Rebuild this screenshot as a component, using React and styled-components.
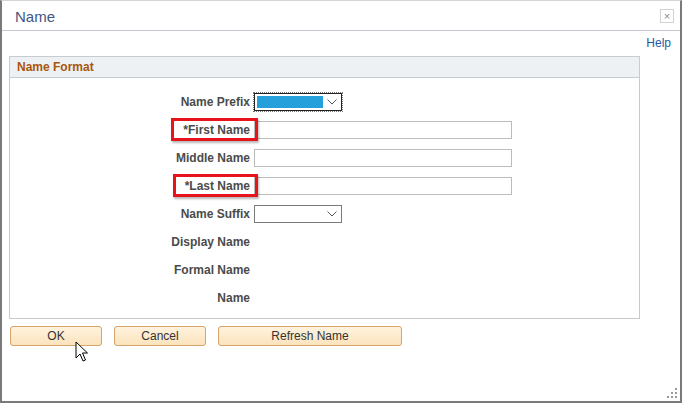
import { Fragment } from "react";
import styled, { createGlobalStyle } from "styled-components";

const Global = createGlobalStyle`
  html, body {
    margin: 0;
    padding: 0;
    background: #ffffff;
  }
  body {
    font-family: "Liberation Sans", Arial, sans-serif;
  }
`;

const Window = styled.div`
  position: relative;
  box-sizing: border-box;
  width: 682px;
  height: 403px;
  background: #fff;
  border: 2px solid #7a7a7a;
  border-top: 1px solid #d4d4d4;
  display: flex;
  flex-direction: column;
`;

const TitleBar = styled.div`
  height: 29px;
  flex-shrink: 0;
  display: flex;
  align-items: center;
  justify-content: space-between;
  padding: 0 6px 0 13px;
  border-bottom: 1px solid #c4cacf;
`;

const Title = styled.div`
  font-size: 15px;
  color: #3e5783;
  padding-top: 2px;
`;

const CloseBtn = styled.div`
  box-sizing: border-box;
  width: 14px;
  height: 14px;
  border: 1px solid #d2d2d2;
  display: flex;
  align-items: center;
  justify-content: center;
  color: #8a8a8a;
  font-size: 11px;
  line-height: 1;
  margin-top: 1px;
`;

const HelpRow = styled.div`
  display: flex;
  justify-content: flex-end;
  padding: 5px 9px 0 0;
  height: 20px;
`;

const HelpLink = styled.a`
  font-size: 12px;
  color: #1e5aa8;
  text-decoration: none;
`;

const Section = styled.div`
  box-sizing: border-box;
  margin-left: 7px;
  width: 631px;
  height: 263px;
  border: 1px solid #c9c9c9;
  border-top: none;
`;

const SectionHeader = styled.div`
  box-sizing: border-box;
  height: 22px;
  margin: 0 -1px;
  background: #eef1f3;
  border: 1px solid #c5ccd2;
  padding-left: 7px;
  display: flex;
  align-items: center;
  font-size: 12px;
  font-weight: bold;
  color: #a9560d;
`;

const Form = styled.div`
  display: grid;
  grid-template-columns: 240px 1fr;
  column-gap: 4px;
  grid-auto-rows: 28px;
  padding-top: 10px;
`;

const Label = styled.div`
  position: relative;
  display: flex;
  align-items: center;
  justify-content: flex-end;
  font-size: 12px;
  font-weight: bold;
  color: #4b4b4b;
`;

const Highlight = styled.span`
  position: absolute;
  top: 2px;
  right: -8px;
  width: ${(p) => p.$w}px;
  height: 23px;
  box-sizing: border-box;
  border: 3px solid #e8141b;
  box-shadow: 1px 2px 2px rgba(0, 0, 0, 0.28);
  z-index: 2;
  pointer-events: none;
`;

const Field = styled.div`
  display: flex;
  align-items: center;
`;

const TextInput = styled.div`
  box-sizing: border-box;
  width: 258px;
  height: 18px;
  border: 1px solid #bcbcbc;
  background: #fff;
`;

const Select = styled.div`
  box-sizing: border-box;
  width: 88px;
  height: 18px;
  display: flex;
  align-items: center;
  justify-content: space-between;
  padding: 0 4px 0 2px;
  background: #fff;
  border: 1px solid ${(p) => (p.$focus ? "#222" : "#7a7a7a")};
  outline: ${(p) => (p.$focus ? "1px dotted #777" : "none")};
  outline-offset: 0;
`;

const SelectValue = styled.div`
  width: 66px;
  height: 12px;
  background: ${(p) => (p.$selected ? "#26a0da" : "transparent")};
`;

const ButtonRow = styled.div`
  display: flex;
  gap: 12px;
  margin: 7px 0 0 8px;
`;

const Button = styled.button`
  box-sizing: border-box;
  width: ${(p) => p.$w}px;
  height: 20px;
  padding: 0;
  font-family: "Liberation Sans", Arial, sans-serif;
  font-size: 12px;
  color: #333;
  background: linear-gradient(#fff3de, #fbe3bc);
  border: 1px solid #d5a56c;
  border-radius: 3px;
`;

const Pointer = styled.svg`
  position: absolute;
  left: 73px;
  top: 340px;
  z-index: 3;
`;

const Grip = styled.svg`
  position: absolute;
  right: 2px;
  bottom: 2px;
`;

const Chevron = () => (
  <svg width="10" height="6" viewBox="0 0 10 6">
    <path d="M0.5 0.5 L5 5 L9.5 0.5" fill="none" stroke="#555" strokeWidth="1" />
  </svg>
);

const rows = [
  { label: "Name Prefix", kind: "select", focus: true },
  { label: "*First Name", kind: "input", mark: 87 },
  { label: "Middle Name", kind: "input" },
  { label: "*Last Name", kind: "input", mark: 85 },
  { label: "Name Suffix", kind: "select" },
  { label: "Display Name" },
  { label: "Formal Name" },
  { label: "Name" },
];

export default function App() {
  return (
    <>
      <Global />
      <Window>
        <TitleBar>
          <Title>Name</Title>
          <CloseBtn>×</CloseBtn>
        </TitleBar>
        <HelpRow>
          <HelpLink href="#">Help</HelpLink>
        </HelpRow>
        <Section>
          <SectionHeader>Name Format</SectionHeader>
          <Form>
            {rows.map((r) => (
              <Fragment key={r.label}>
                <Label>
                  {r.label}
                  {r.mark && <Highlight $w={r.mark} />}
                </Label>
                <Field>
                  {r.kind === "input" && <TextInput />}
                  {r.kind === "select" && (
                    <Select $focus={r.focus}>
                      <SelectValue $selected={r.focus} />
                      <Chevron />
                    </Select>
                  )}
                </Field>
              </Fragment>
            ))}
          </Form>
        </Section>
        <ButtonRow>
          <Button $w={92}>OK</Button>
          <Button $w={92}>Cancel</Button>
          <Button $w={184}>Refresh Name</Button>
        </ButtonRow>
        <Pointer width="14" height="22" viewBox="0 0 14 22">
          <path
            d="M1 1 L1 17 L5 13 L8 20 L10.5 19 L7.5 12 L12.5 12 Z"
            fill="#fff"
            stroke="#000"
            strokeWidth="1"
            strokeLinejoin="miter"
          />
        </Pointer>
        <Grip width="12" height="12" viewBox="0 0 12 12">
          <g fill="#9a9a9a">
            <rect x="9" y="1" width="2" height="2" />
            <rect x="5" y="5" width="2" height="2" />
            <rect x="9" y="5" width="2" height="2" />
            <rect x="1" y="9" width="2" height="2" />
            <rect x="5" y="9" width="2" height="2" />
            <rect x="9" y="9" width="2" height="2" />
          </g>
        </Grip>
      </Window>
    </>
  );
}
